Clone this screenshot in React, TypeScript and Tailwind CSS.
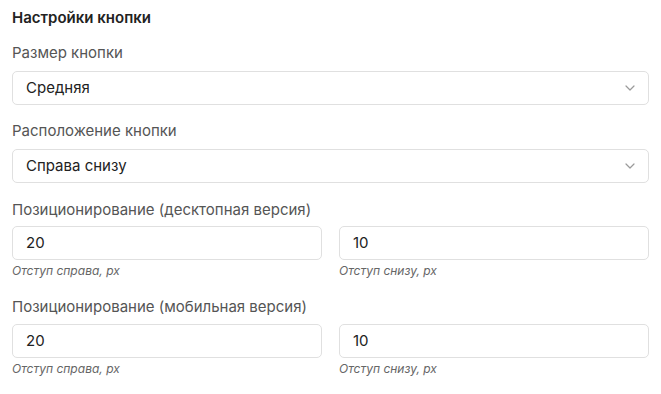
import React from "react";

const Chevron = () => (
  <svg width="10" height="6" viewBox="0 0 10 6" fill="none" className="shrink-0">
    <path d="M1 1l4 4 4-4" stroke="#9a9a9a" strokeWidth="1.2" strokeLinecap="round" strokeLinejoin="round" />
  </svg>
);

const Select = ({ value }: { value: string }) => (
  <div className="flex items-center justify-between h-[34px] px-[13px] border border-[#e0e0e0] rounded-[5px] bg-white">
    <span className="text-[15px] text-[#222]">{value}</span>
    <Chevron />
  </div>
);

const NumberField = ({ value, hint }: { value: string; hint: string }) => (
  <div className="flex-1 flex flex-col">
    <div className="flex items-center h-[34px] px-[13px] border border-[#e0e0e0] rounded-[5px] bg-white">
      <span className="text-[15px] text-[#222]">{value}</span>
    </div>
    <p className="mt-[3px] text-[12px] leading-[15px] italic text-[#666]">{hint}</p>
  </div>
);

const Label = ({ text, className = "mb-[8px]" }: { text: string; className?: string }) => (
  <p className={"text-[15px] leading-[20px] text-[#555] " + className}>{text}</p>
);

const App = () => {
  return (
    <section
      className="w-[661px] h-[394px] bg-white px-[12px] pt-[8px]"
      style={{ fontFamily: "Inter, 'Noto Sans', sans-serif" }}>
      <h1 className="text-[15px] leading-[20px] font-semibold text-[#222]">Настройки кнопки</h1>

      <div className="mt-[15px]">
        <Label text="Размер кнопки" />
        <Select value="Средняя" />
      </div>

      <div className="mt-[16px]">
        <Label text="Расположение кнопки" />
        <Select value="Справа снизу" />
      </div>

      <div className="mt-[17px]">
        <Label text="Позиционирование (десктопная версия)" className="mb-[6px]" />
        <div className="flex gap-[17px]">
          <NumberField value="20" hint="Отступ справа, px" />
          <NumberField value="10" hint="Отступ снизу, px" />
        </div>
      </div>

      <div className="mt-[19px]">
        <Label text="Позиционирование (мобильная версия)" className="mb-[7px]" />
        <div className="flex gap-[17px]">
          <NumberField value="20" hint="Отступ справа, px" />
          <NumberField value="10" hint="Отступ снизу, px" />
        </div>
      </div>
    </section>
  );
};

export default App;
